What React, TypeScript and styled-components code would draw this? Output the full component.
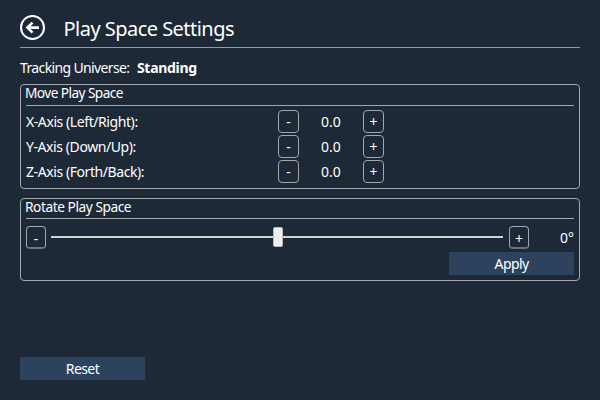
import React from "react";
import styled, { createGlobalStyle } from "styled-components";

const GlobalStyle = createGlobalStyle`
  * { box-sizing: border-box; }
  body { margin: 0; background: #1d2937; }
`;

const Page = styled.main`
  width: 600px;
  height: 400px;
  padding: 8px 20px 20px;
  display: flex;
  flex-direction: column;
  background: #1d2937;
  color: #fff;
  font-family: "Noto Sans", sans-serif;
  font-size: 14px;
  line-height: 20px;
  white-space: nowrap;
  overflow: hidden;
`;

const Header = styled.header`
  height: 40px;
  flex: none;
  display: flex;
  align-items: center;
  gap: 17.5px;
  border-bottom: 1px solid #929aa1;
`;

const BackButton = styled.button`
  width: 26px;
  height: 26px;
  padding: 0;
  border: 0;
  background: none;
  display: block;
`;

const Title = styled.h1`
  margin: 2px 0 0;
  font-size: 20px;
  font-weight: 400;
  line-height: 28px;
  letter-spacing: -0.53px;
`;

const Text = styled.span<{ $spacing?: number }>`
  letter-spacing: ${(p) => p.$spacing ?? -0.42}px;
`;

const Universe = styled.div`
  height: 36px;
  padding-top: 10px;
  display: flex;
  gap: 7.5px;
`;

const Strong = styled.strong`
  letter-spacing: -0.3px;
`;

const Group = styled.section<{ $height: number }>`
  height: ${(p) => p.$height}px;
  flex: none;
  margin-bottom: 9px;
  padding: 0 5px;
  border: 1px solid #a1a7ac;
  border-radius: 4px;
`;

const GroupTitle = styled.h2<{ $height: number }>`
  height: ${(p) => p.$height}px;
  margin: 0 0 3px;
  border-bottom: 1px solid #a1a7ac;
  font-size: 13.7px;
  font-weight: 400;
  line-height: 15px;
  text-indent: -1px;
`;

const AxisRow = styled.div`
  height: 25px;
  display: grid;
  grid-template-columns: 252px 21px 64px 21px;
  align-items: center;
`;

const Value = styled.span`
  text-align: center;
`;

const StepButton = styled.button<{ $shaded?: boolean }>`
  width: ${(p) => (p.$shaded ? 20 : 21)}px;
  height: 23px;
  padding: ${(p) => (p.$shaded ? 2 : 1)}px 0 0;
  border: 1px solid #a1a7ac;
  border-bottom: ${(p) => (p.$shaded ? "2px solid #697482" : "1px solid #a1a7ac")};
  border-radius: 4px;
  background: none;
  color: #fff;
  font: inherit;
  line-height: 20px;
`;

const SliderRow = styled.div`
  height: 30px;
  display: grid;
  grid-template-columns: 20px 453px 20px 1fr;
  column-gap: 5px;
  padding-top: 4px;
`;

const Track = styled.div`
  height: 22px;
  display: flex;
  align-items: center;
  justify-content: center;
  background: linear-gradient(#d0d1d1, #d0d1d1) 0 10px / 452px 2px no-repeat;
`;

const Thumb = styled.div`
  width: 10px;
  height: 20px;
  border: 1px solid #b5bac0;
  border-radius: 2px;
  background: #eee;
`;

const Angle = styled.span`
  text-align: right;
  line-height: 24px;
`;

const ActionButton = styled.button`
  width: 125px;
  height: 23px;
  padding: 0;
  border: 0;
  background: #2d435d;
  color: #fff;
  font: inherit;
  line-height: 23px;
  letter-spacing: -0.6px;
  display: block;
  margin-left: auto;
`;

const ResetButton = styled(ActionButton)`
  flex: none;
  margin: auto 0 0;
`;

const axes = ["X-Axis (Left/Right):", "Y-Axis (Down/Up):", "Z-Axis (Forth/Back):"];

export default function App() {
  return (
    <Page>
      <GlobalStyle />
      <Header>
        <BackButton aria-label="Back">
          <svg width="26" height="26" viewBox="0 0 26 26" fill="none" stroke="#fff">
            <circle cx="12.5" cy="12.5" r="11.5" strokeWidth="2" />
            <path d="M7.4 12.6H19M12.5 7.6L7.4 12.6L12.5 17.6" strokeWidth="2.6" />
          </svg>
        </BackButton>
        <Title>Play Space Settings</Title>
      </Header>
      <Universe>
        <Text $spacing={-0.63}>Tracking Universe:</Text>
        <Strong>Standing</Strong>
      </Universe>
      <Group $height={105}>
        <GroupTitle $height={21}><Text $spacing={-0.58}>Move Play Space</Text></GroupTitle>
        {axes.map((axis) => (
          <AxisRow key={axis}>
            <Text>{axis}</Text>
            <StepButton>-</StepButton>
            <Value>0.0</Value>
            <StepButton>+</StepButton>
          </AxisRow>
        ))}
      </Group>
      <Group $height={83}>
        <GroupTitle $height={20}><Text $spacing={-0.44}>Rotate Play Space</Text></GroupTitle>
        <SliderRow>
          <StepButton $shaded>-</StepButton>
          <Track><Thumb /></Track>
          <StepButton $shaded>+</StepButton>
          <Angle>0°</Angle>
        </SliderRow>
        <ActionButton>Apply</ActionButton>
      </Group>
      <ResetButton>Reset</ResetButton>
    </Page>
  );
}
